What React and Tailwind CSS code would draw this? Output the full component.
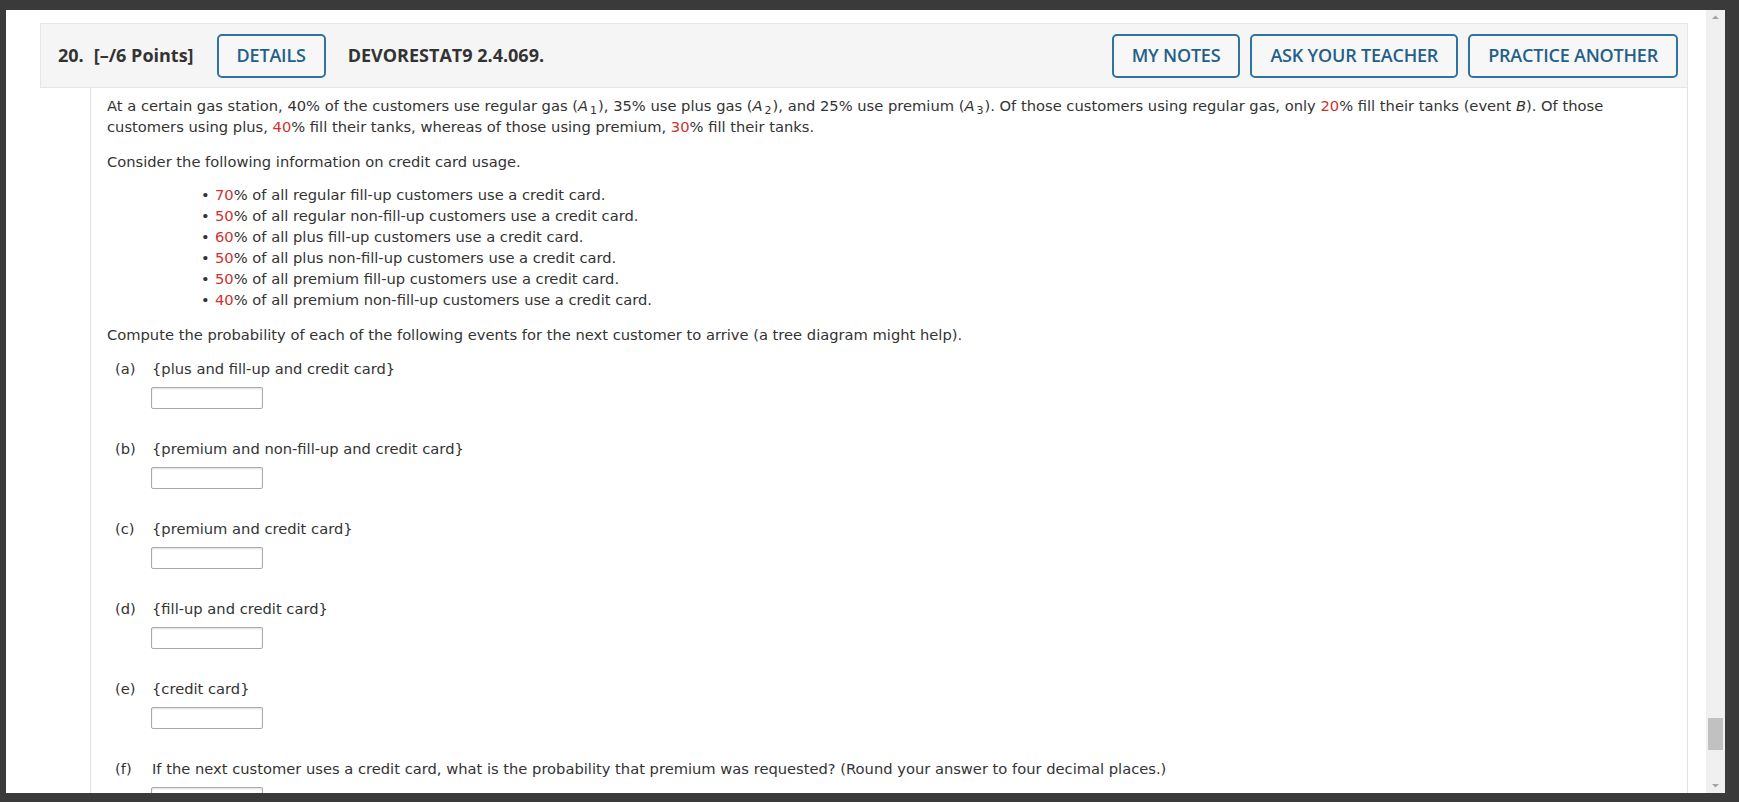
import React from 'react';

const HEAD_FONT = "font-['Open_Sans',sans-serif]";
const BODY_FONT = "font-['DejaVu_Sans','Verdana',sans-serif]";

function Pct({ n }) {
  return (
    <>
      <span className="text-[#d0312d]">{n}</span>%
    </>
  );
}

function A({ i }) {
  return (
    <>
      <i>A</i>
      <sub className="text-[11px] leading-none ml-[2px] mr-[1px]">{i}</sub>
    </>
  );
}

function HeadButton({ children }) {
  return (
    <button className="h-[44px] px-[18px] rounded-[5px] border-2 border-[#2f74a0] bg-[#f7f7f7] text-[#245f8a] text-[18px] font-semibold tracking-[-0.2px]">
      {children}
    </button>
  );
}

const BULLETS = [
  ['70', 'of all regular fill-up customers use a credit card.'],
  ['50', 'of all regular non-fill-up customers use a credit card.'],
  ['60', 'of all plus fill-up customers use a credit card.'],
  ['50', 'of all plus non-fill-up customers use a credit card.'],
  ['50', 'of all premium fill-up customers use a credit card.'],
  ['40', 'of all premium non-fill-up customers use a credit card.'],
];

const PARTS = [
  ['a', '{plus and fill-up and credit card}'],
  ['b', '{premium and non-fill-up and credit card}'],
  ['c', '{premium and credit card}'],
  ['d', '{fill-up and credit card}'],
  ['e', '{credit card}'],
  ['f', 'If the next customer uses a credit card, what is the probability that premium was requested? (Round your answer to four decimal places.)'],
];

function Part({ letter, text }) {
  return (
    <div className="pl-[8px] mb-[29px]">
      <div className="flex">
        <span className="w-[37px] shrink-0">({letter})</span>
        <span>{text}</span>
      </div>
      <div className="pl-[36px] mt-[8px]">
        <div className="w-[112px] h-[22px] border border-[#a9a9a9] rounded-[2px] bg-white shadow-[inset_0_1px_2px_rgba(0,0,0,0.12)]" />
      </div>
    </div>
  );
}

function Scrollbar() {
  return (
    <div className="w-[19px] bg-[#f0f0f0] flex flex-col items-center justify-between">
      <svg width="19" height="17" viewBox="0 0 19 17">
        <path d="M6 9 L9.5 5.5 L13 9 Z" fill="#a3a3a3" />
      </svg>
      <div className="flex-1 w-full flex flex-col justify-end px-[2px] pb-[26px]">
        <div className="h-[32px] bg-[#c1c1c1]" />
      </div>
      <svg width="19" height="17" viewBox="0 0 19 17">
        <path d="M6 8 L9.5 11.5 L13 8 Z" fill="#a3a3a3" />
      </svg>
    </div>
  );
}

export default function App() {
  return (
    <div className="h-[802px] w-full bg-[#3a3a3a] flex pt-[10px] pb-[9px] pl-[6px] pr-[14px] overflow-hidden">
      <div className="flex-1 bg-white overflow-hidden flex flex-col pl-[34px] pr-[18px] pt-[13px]">
        {/* Question header */}
        <div className={`${HEAD_FONT} h-[65px] shrink-0 bg-[#f5f5f5] border border-[#e6e6e6] flex items-center pl-[17px] pr-[9px] text-[#333]`}>
          <span className="text-[18px] font-bold">20.</span>
          <span className="text-[18px] font-bold ml-[10px]">[–/6 Points]</span>
          <div className="ml-[23px]">
            <HeadButton>DETAILS</HeadButton>
          </div>
          <span className="text-[18px] font-bold ml-[22px]">DEVORESTAT9 2.4.069.</span>
          <div className="ml-auto flex gap-[10px]">
            <HeadButton>MY NOTES</HeadButton>
            <HeadButton>ASK YOUR TEACHER</HeadButton>
            <HeadButton>PRACTICE ANOTHER</HeadButton>
          </div>
        </div>

        {/* Question body */}
        <div className={`${BODY_FONT} flex-1 ml-[50px] border-l border-r border-[#e2e2e2] pl-[16px] pr-[20px] pt-[7px] text-[14.7px] leading-[21px] text-[#333]`}>
          <p>
            At a certain gas station, 40% of the customers use regular gas (<A i="1" />), 35% use plus gas (<A i="2" />), and 25% use premium (<A i="3" />). Of those customers using regular gas, only <Pct n="20" /> fill their tanks (event <i>B</i>). Of those customers using plus, <Pct n="40" /> fill their tanks, whereas of those using premium, <Pct n="30" /> fill their tanks.
          </p>
          <p className="mt-[14px]">Consider the following information on credit card usage.</p>
          <ul className="mt-[12px] pl-[94px]">
            {BULLETS.map(([n, t], i) => (
              <li key={i} className="flex h-[21px]">
                <span className="w-[14px] shrink-0">•</span>
                <span>
                  <Pct n={n} /> {t}
                </span>
              </li>
            ))}
          </ul>
          <p className="mt-[14px]">Compute the probability of each of the following events for the next customer to arrive (a tree diagram might help).</p>
          <div className="mt-[13px]">
            {PARTS.map(([l, t]) => (
              <Part key={l} letter={l} text={t} />
            ))}
          </div>
        </div>
      </div>
      <Scrollbar />
    </div>
  );
}
